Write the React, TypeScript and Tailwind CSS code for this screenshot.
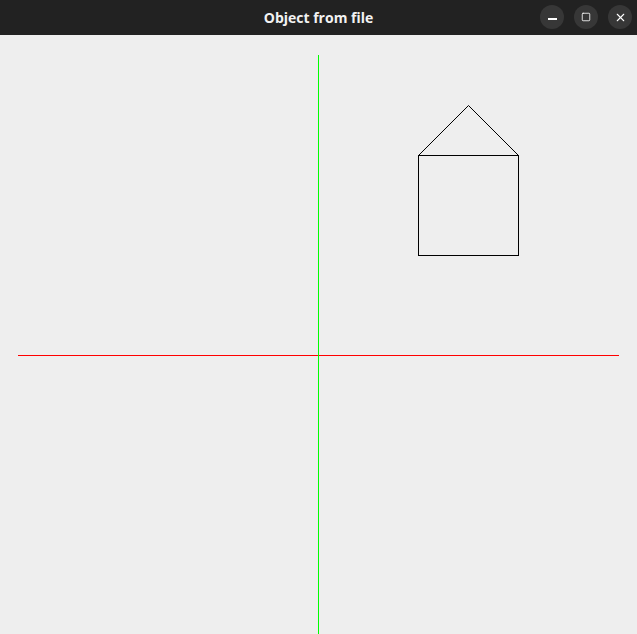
import { Square, X } from 'lucide-react'

export default function App() {
  return (
    <div className="w-[637px] h-[634px] flex flex-col bg-[#eeeeee] overflow-hidden">
      {/* Title bar */}
      <div className="h-[35px] bg-[#222222] flex items-center relative shrink-0">
        <div className="flex-1 text-center text-[14px] font-bold text-[#f2f2f2] font-['Open_Sans',sans-serif]">
          Object from file
        </div>
        <div className="absolute right-[5px] top-[5px] flex gap-[10px]">
          <button className="w-[24px] h-[24px] rounded-full bg-[#373737] flex items-center justify-center">
            <div className="w-[9px] h-[1.5px] bg-white translate-y-[2px]" />
          </button>
          <button className="w-[24px] h-[24px] rounded-full bg-[#373737] flex items-center justify-center text-white">
            <Square size={10} strokeWidth={2} />
          </button>
          <button className="w-[24px] h-[24px] rounded-full bg-[#373737] flex items-center justify-center text-white">
            <X size={13} strokeWidth={2} />
          </button>
        </div>
      </div>

      {/* Drawing area */}
      <svg width={637} height={599} className="block" shapeRendering="crispEdges">
        <line x1={18} y1={320.5} x2={619} y2={320.5} stroke="#ff0000" strokeWidth={1} />
        <line x1={318.5} y1={20} x2={318.5} y2={599} stroke="#00ff00" strokeWidth={1} />
        <rect x={418.5} y={120.5} width={100} height={100} fill="none" stroke="#000" strokeWidth={1} />
        <polyline
          points="418.5,120.5 468.5,70.5 518.5,120.5"
          fill="none"
          stroke="#000"
          strokeWidth={1}
          shapeRendering="auto"
        />
      </svg>
    </div>
  )
}
